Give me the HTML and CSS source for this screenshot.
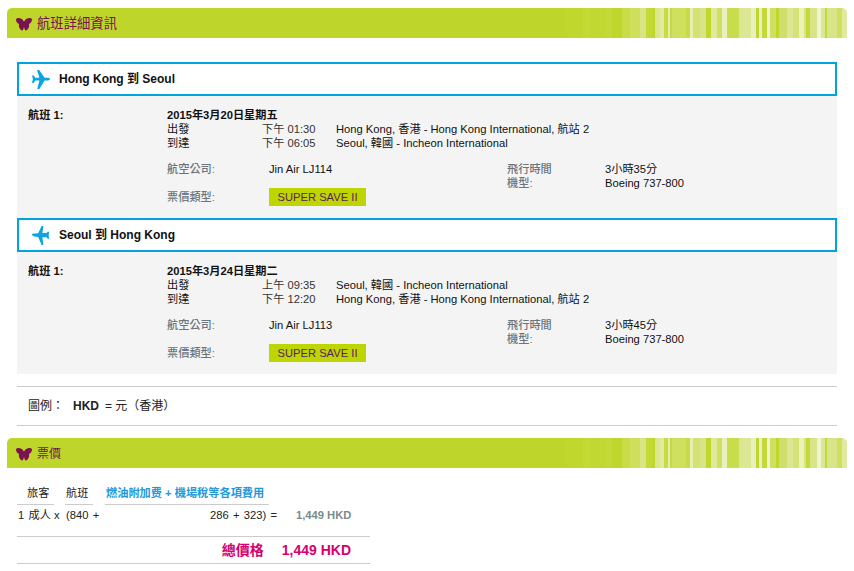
FILE: index.html
```html
<!DOCTYPE html>
<html lang="zh-Hant">
<head>
<meta charset="utf-8">
<title>航班詳細資訊</title>
<link rel="stylesheet" href="styles.css">
</head>
<body>
<svg class="defs" width="0" height="0" aria-hidden="true">
  <symbol id="fly" viewBox="0 0 16 13">
    <path d="M0 1C1.2 -.3 3.4 -.2 4.8 .5C6.2 1.2 7.2 2.4 8 3.6C8.8 2.4 9.8 1.2 11.2 .5C12.6 -.2 14.8 -.3 16 1C16 3.4 14.9 5.3 12.9 6.1C13.6 7.6 12.8 10 11.4 11.6C10.2 13.2 9 12.6 8.5 10.8L8 8.8L7.5 10.8C7 12.6 5.8 13.2 4.6 11.6C3.2 10 2.4 7.6 3.1 6.1C1.1 5.3 0 3.4 0 1Z"/>
  </symbol>
</svg>
<section class="bar"><svg class="fly"><use href="#fly"/></svg><h2 class="bar-title bar-title-wide">航班詳細資訊</h2></section>

<div class="flights">
  <div class="route">
    <svg class="plane" viewBox="0 0 18 19"><path d="M5 0H7.2L12.6 7.7H16C17.2 7.7 18 8.4 18 9.1C18 9.8 17.2 10.5 16 10.5H12.6L7.4 19H5.2L7.4 10.6H3.2L1.8 13H0L.9 9.1L0 5.6H1.8L3.2 7.7H7.4Z"/></svg>
    <span>Hong Kong 到 Seoul</span>
  </div>
  <div class="panel">
    <div class="trip">
      <div class="name">航班 1:</div>
      <div class="date">2015年3月20日星期五</div>
      <div class="stop">出發</div><div class="time">下午 01:30</div><div class="place">Hong Kong, 香港 - Hong Kong International, 航站 2</div>
      <div class="stop">到達</div><div class="time">下午 06:05</div><div class="place">Seoul, 韓國 - Incheon International</div>
    </div>
    <div class="info">
      <div class="key">航空公司:</div><div>Jin Air LJ114</div><div class="key">飛行時間</div><div>3小時35分</div>
      <div class="key key-3">機型:</div><div>Boeing 737-800</div>
      <div class="key key-fare">票價類型:</div><div class="fare-cell"><span class="badge">SUPER SAVE II</span></div>
    </div>
  </div>

  <div class="route">
    <svg class="plane" viewBox="0 0 18 19"><path d="M0 8.6C.4 8 1.4 7.7 2.6 7.6L6.2 7.2L9.6 0H11.4L10.4 7H14.4L15.8 5.8H17.2L16.6 9.2L17.2 12.8H15.8L14.4 11.2H10.4L11.4 19H9.6L6.2 11L2.6 10.4C1.4 10.2 .4 9.6 0 9Z"/></svg>
    <span>Seoul 到 Hong Kong</span>
  </div>
  <div class="panel">
    <div class="trip">
      <div class="name">航班 1:</div>
      <div class="date">2015年3月24日星期二</div>
      <div class="stop">出發</div><div class="time">上午 09:35</div><div class="place">Seoul, 韓國 - Incheon International</div>
      <div class="stop">到達</div><div class="time">下午 12:20</div><div class="place">Hong Kong, 香港 - Hong Kong International, 航站 2</div>
    </div>
    <div class="info">
      <div class="key">航空公司:</div><div>Jin Air LJ113</div><div class="key">飛行時間</div><div>3小時45分</div>
      <div class="key key-3">機型:</div><div>Boeing 737-800</div>
      <div class="key key-fare">票價類型:</div><div class="fare-cell"><span class="badge">SUPER SAVE II</span></div>
    </div>
  </div>

  <div class="legend"><span class="legend-label">圖例：</span><b class="legend-code">HKD</b><span>= 元（香港）</span></div>
</div>

<section class="bar bar-price"><svg class="fly"><use href="#fly"/></svg><h2 class="bar-title">票價</h2></section>

<div class="price">
  <div class="price-head">
    <span class="head-a">旅客</span><span class="head-b">航班</span><span class="head-c">燃油附加费 + 機場稅等各項費用</span>
  </div>
  <div class="price-row">
    <span class="pax">1 成人</span><span class="times">x</span><span class="base">(840 +</span><span class="tax">286 + 323) =</span><b class="sub">1,449 HKD</b>
  </div>
  <div class="total"><span>總價格</span><span>1,449 HKD</span></div>
</div>
</body>
</html>
```
FILE: styles.css
```css
* { box-sizing: border-box; }
html, body { margin: 0; padding: 0; }
body {
  background: #fff;
  color: #111;
  font: 11.2px/14px "Liberation Sans", "Noto Sans CJK TC", sans-serif;
  padding: 8px 7px 0;
  width: 854px;
  height: 571px;
  overflow: hidden;
}
.defs { position: absolute; }
.bar {
  width: 840px;
  height: 30px;
  display: flex;
  align-items: center;
  padding-left: 9px;
  border-radius: 5px 5px 0 0;
  background: linear-gradient(90deg,
    #bed62b 0 560px, #c0d72e 560px 576px, #c3d936 576px 583px, #c1d832 583px 598px,
    #c4d938 598px 605px, #bfd72c 605px 615px, #c8dc46 615px 623px, #cfdf5c 623px 633px,
    #d9e582 633px 639px, #c4d938 639px 645px, #bfd72c 645px 648px, #dbe68c 648px 653px,
    #e2ea9e 653px 657px, #c7db42 657px 661px, #e4ecb0 661px 663px, #c5da3e 663px 665px,
    #cfdf5e 665px 679px, #c8dc48 679px 683px, #e6eeb4 683px 686px, #d4e274 686px 693px,
    #d8e488 693px 699px, #bfd72c 699px 704px, #dfe99a 704px 710px, #d0df64 710px 715px,
    #e9f0c0 715px 720px, #c8dc4c 720px 732px, #dce796 732px 744px, #e9f0c0 744px 749px,
    #bfd72c 749px 752px, #e9f0c0 752px 755px, #c4d938 755px 760px, #eef3d0 760px 763px,
    #cfdf5e 763px 769px, #bfd72c 769px 772px, #d0df6c 772px 780px, #dce796 780px 786px,
    #d4e278 786px 792px, #ebf3b4 792px 797px, #d8e488 797px 799px, #c4d938 799px 803px,
    #d8e488 803px 810px, #eef3d0 810px 814px, #dce796 814px 818px, #c4d938 818px 820px,
    #d8e48a 820px 830px, #cfdf5e 830px 835px, #e0e99e 835px 840px);
}
.bar-price { margin-top: 12px; }
.fly { width: 16px; height: 13px; fill: #7b1150; margin: 2px 5px 0 0; flex: none; }
.bar-title { margin: 2px 0 0; font-size: 12px; font-weight: 400; color: #7b1150; line-height: 14px; }
.bar-title-wide { font-size: 13.33px; }

.flights { width: 820px; margin: 24px 0 0 10px; }
.route {
  height: 34px;
  border: 2px solid #00a3dc;
  background: #fff;
  display: flex;
  align-items: center;
  padding-left: 13px;
  font-size: 12px;
  font-weight: 700;
  color: #111;
}
.plane { width: 18px; height: 19px; fill: #0ea5de; margin-right: 9px; flex: none; }
.panel { background: #f4f4f4; padding: 12px 0 8px; height: 122px; }
.trip {
  display: grid;
  grid-template-columns: 139px 95px 74px 1fr;
  padding-left: 11px;
  color: #111;
}
.name { font-weight: 700; grid-row: 1; }
.date { font-weight: 700; grid-column: 2 / 5; }
.stop { grid-column: 2; }
.time { color: #333; }
.info {
  display: grid;
  grid-template-columns: 102px 238px 98px 1fr;
  grid-auto-rows: 14px;
  margin: 12px 0 0 150px;
}
.key { color: #6b757b; font-weight: 500; }
.key-3 { grid-column: 3; }
.key-fare { grid-column: 1; grid-row: 3; }
.fare-cell { grid-column: 2; grid-row: 3; }
.badge {
  display: block;
  width: 97px;
  height: 18px;
  line-height: 18px;
  text-align: center;
  background: #bdd500;
  color: #5e1a66;
  margin-top: -2px;
}
.legend {
  height: 40px;
  margin-top: 12px;
  border-top: 1px solid #ccc;
  border-bottom: 1px solid #ccc;
  display: flex;
  align-items: center;
  padding-left: 11px;
  color: #222;
  font-size: 12px;
}
.legend-label { width: 45px; }
.legend-code { width: 32px; }

.price { width: 353px; margin: 0 0 0 10px; }
.price-head { display: flex; height: 19px; margin-top: 18px; }
.price-head span { display: block; height: 19px; border-bottom: 1px solid #ccc; color: #222; }
.head-a { width: 37px; padding-left: 10px; }
.head-b { width: 28px; margin-left: 11px; padding-left: 1px; }
.price-head .head-c { width: 164px; margin-left: 12px; color: #2398d8; font-weight: 700; padding-left: 1px; }
.price-row { display: flex; height: 14px; margin-top: 3px; color: #222; word-spacing: 1.2px; }
.pax { width: 37px; padding-left: 1px; }
.times { width: 12px; }
.base { width: 144px; }
.tax { width: 86px; white-space: nowrap; }
.sub { color: #7b8a8b; word-spacing: 0; }
.total {
  height: 28px;
  margin-top: 14px;
  border-top: 1px solid #ccc;
  border-bottom: 1px solid #ccc;
  display: flex;
  justify-content: flex-end;
  align-items: center;
  gap: 18px;
  padding-right: 19px;
  color: #d6006e;
  font-size: 14px;
  font-weight: 700;
}
```
